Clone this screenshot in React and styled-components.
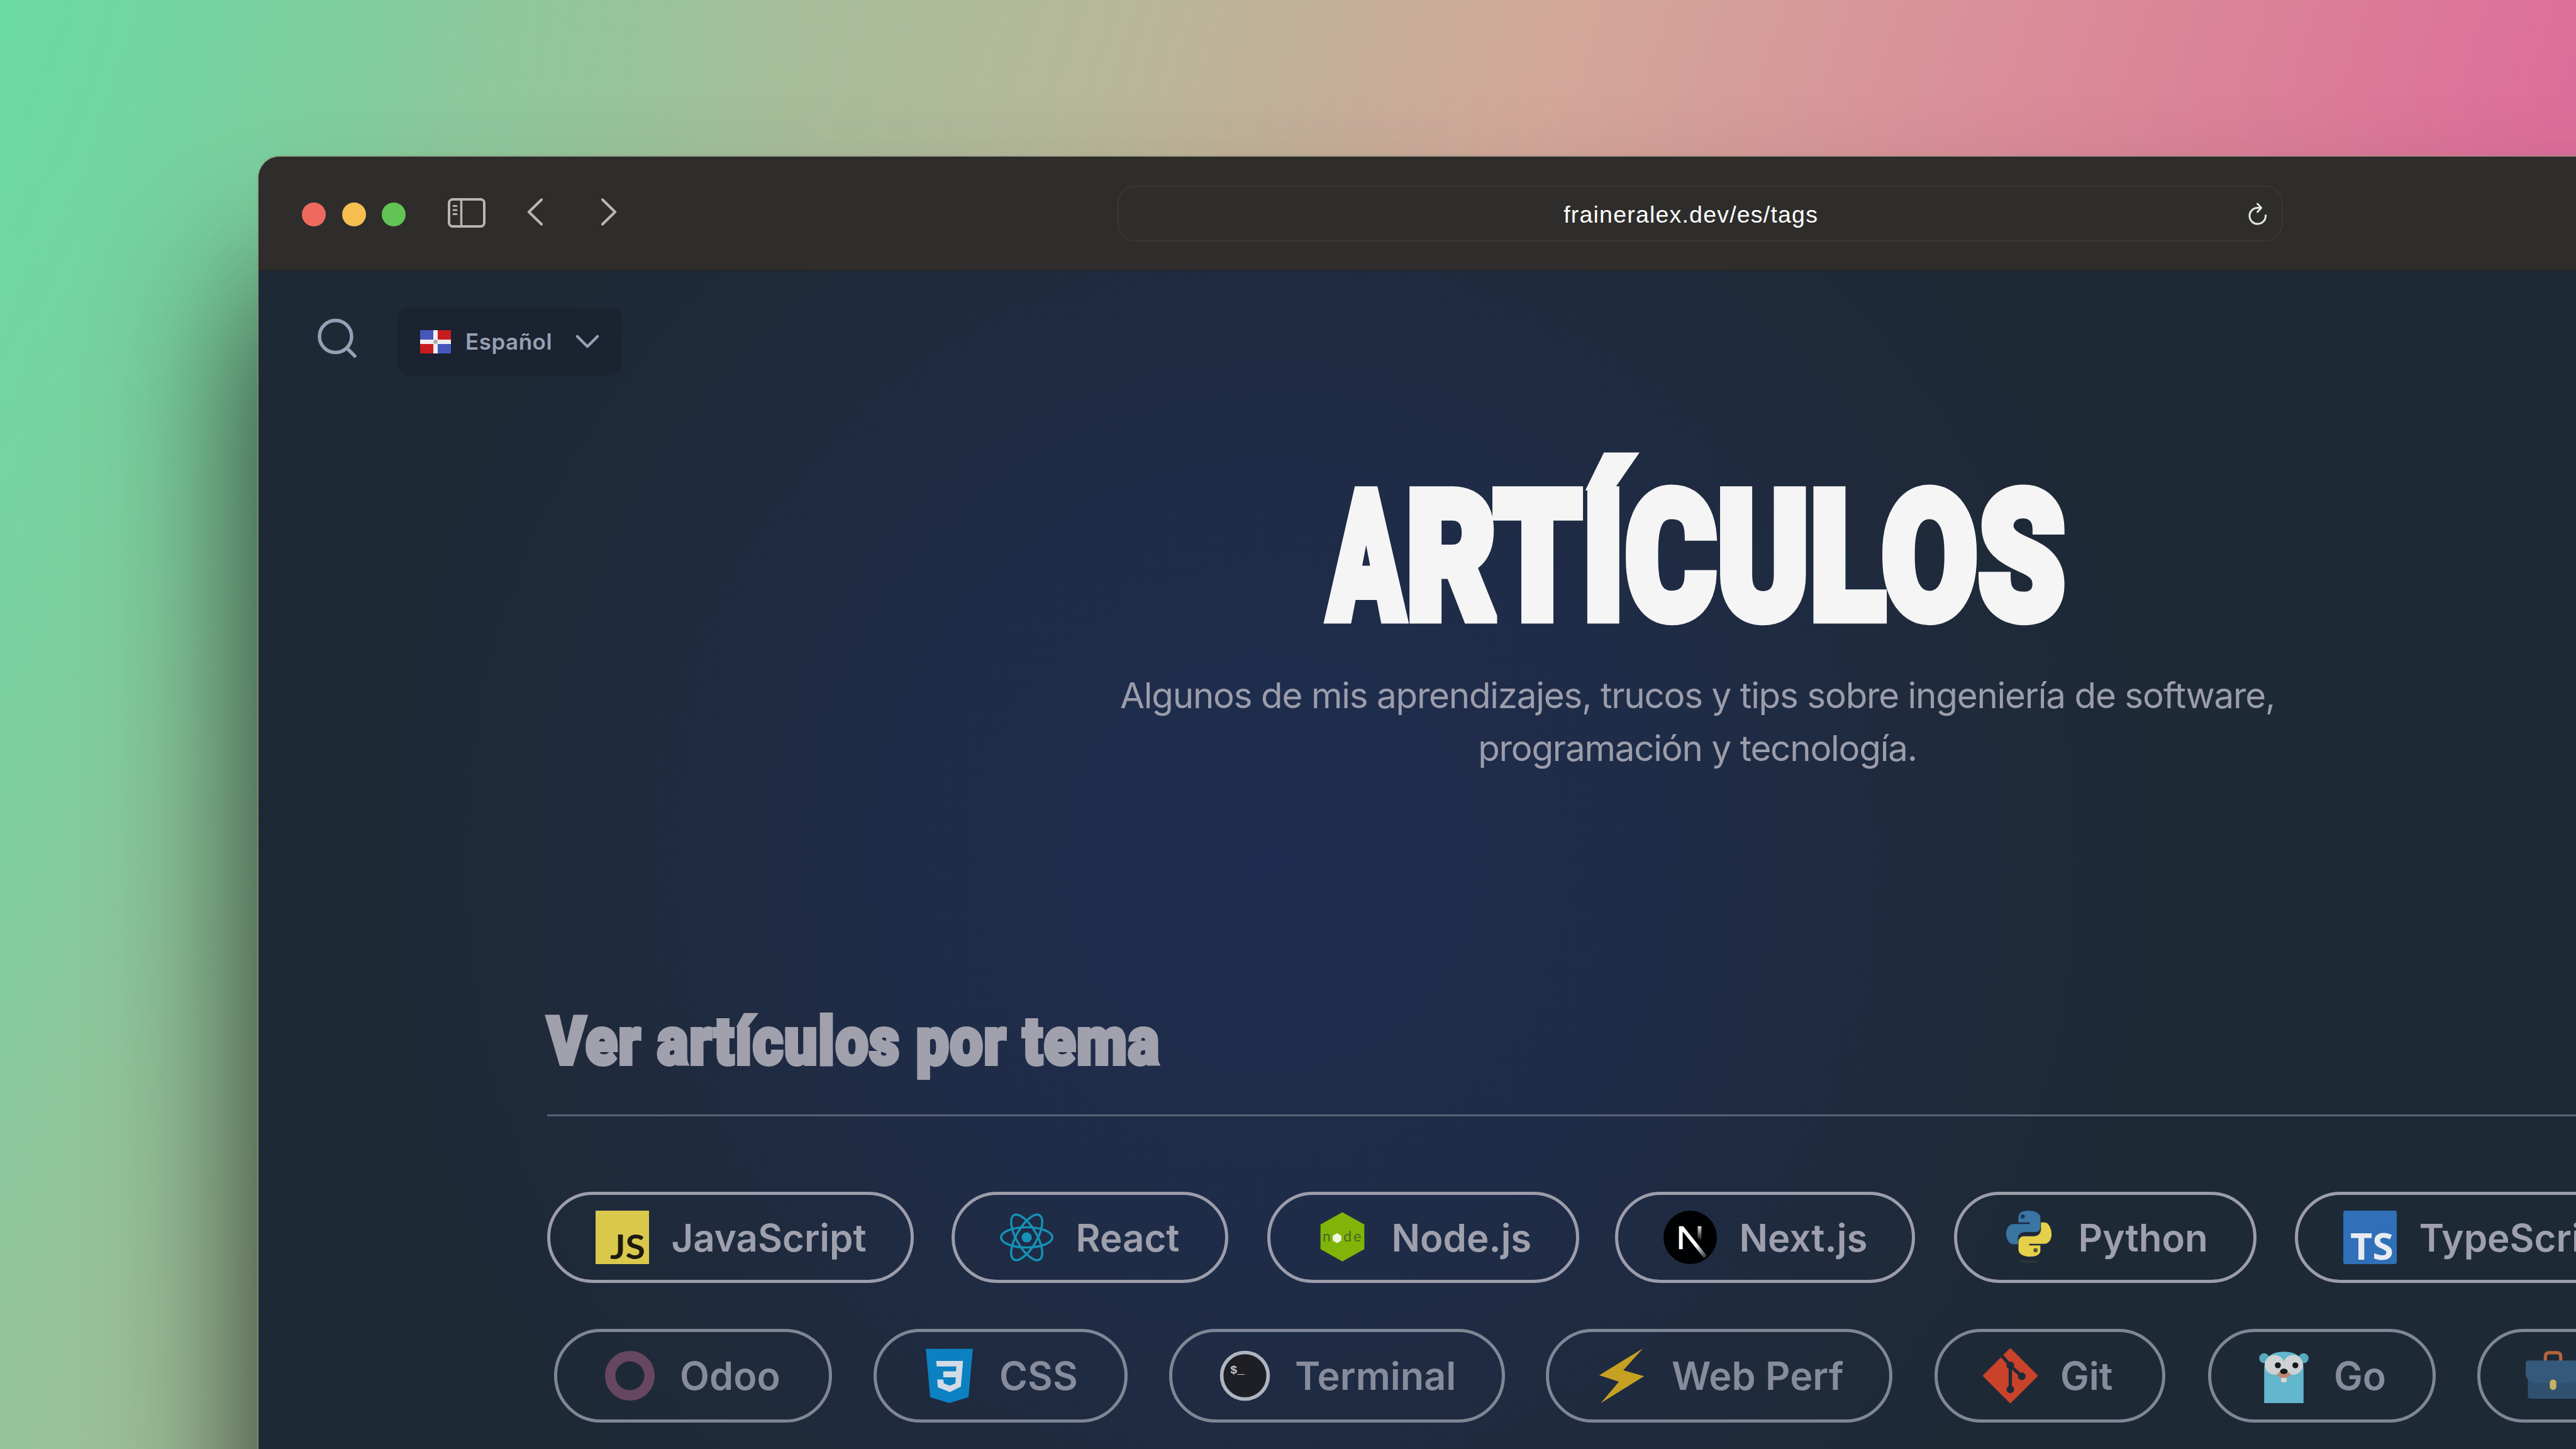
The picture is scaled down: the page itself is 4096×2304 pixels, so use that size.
import React from "react";
import styled, { createGlobalStyle } from "styled-components";

const Global = createGlobalStyle`
  html, body { margin: 0; padding: 0; background: #1e2836; }
  * { box-sizing: border-box; }
`;

const Desktop = styled.div`
  width: 4096px;
  height: 2304px;
  overflow: hidden;
  padding: 249px 0 0 411px;
  background:
    radial-gradient(ellipse 1300px 2100px at 0px 0px, rgba(96, 222, 162, 0.5), rgba(96, 222, 162, 0) 100%),
    linear-gradient(108deg, #78d5a1 0%, #82cd9e 7%, #98c39a 16%, #b5b899 36%, #d3a799 52%, #db8899 70%, #dc6f99 85%);
  font-family: Inter, "Liberation Sans", sans-serif;
`;

const Browser = styled.div`
  width: 4700px;
  height: 3000px;
  border-radius: 34px 0 0 0;
  display: flex;
  flex-direction: column;
  background: #2e2d2b;
  box-shadow: 0 0 0 2px rgba(150, 150, 125, 0.55), 0 210px 460px rgba(0, 0, 0, 0.76);
`;

const Toolbar = styled.header`
  height: 182px;
  flex: none;
  display: flex;
  align-items: center;
  padding-left: 69px;
  border-bottom: 2px solid #22262b;
  border-radius: 34px 0 0 0;
  background: #2e2d2b;
`;

const Lights = styled.div`
  display: flex;
  gap: 25.6px;
  margin-top: 4px;
`;

const Light = styled.span`
  width: 38px;
  height: 38px;
  border-radius: 50%;
  background: ${(p) => p.$color};
`;

const SidebarIcon = styled.svg`
  margin-left: 67px;
  margin-top: -2px;
  width: 60px;
  height: 47px;
`;

const NavIcon = styled.svg`
  width: 26px;
  height: 44px;
  margin-left: ${(p) => p.$gap}px;
  margin-top: -4px;
`;

const Address = styled.div`
  margin-left: 796px;
  margin-top: 1px;
  width: 1853px;
  height: 89px;
  border: 2px solid #393836;
  border-radius: 28px;
  display: flex;
  align-items: center;
  justify-content: space-between;
  padding: 0 22px 0 707px;
`;

const Url = styled.span`
  margin-top: 2px;
  font: 400 37.5px/48px "Liberation Sans", Arial, sans-serif;
  letter-spacing: 1.2px;
  color: #fff;
  white-space: nowrap;
`;

const ReloadIcon = styled.svg`
  width: 32px;
  height: 38px;
`;

const Page = styled.main`
  flex: 1;
  display: flex;
  flex-direction: column;
  background: radial-gradient(circle 1420px at 1610px 940px, #1f2d50 0%, #1f2c47 45%, #1f2a3d 75%, #1e2936 100%);
`;

const TopBar = styled.div`
  display: flex;
  align-items: center;
  height: 108px;
  margin: 58px 0 0 92px;
`;

const SearchIcon = styled.svg`
  width: 68px;
  height: 68px;
  margin-top: -13px;
`;

const LangButton = styled.button`
  width: 357px;
  height: 108px;
  margin-left: 61px;
  padding: 0 36px;
  border: 0;
  border-radius: 18px;
  background: #1b2230;
  display: flex;
  align-items: center;
  color: #95a1b4;
  font: 600 35px/44px Inter, sans-serif;
  letter-spacing: 0.5px;
`;

const Flag = styled.svg`
  width: 49px;
  height: 37px;
  margin-right: 23px;
`;

const LangChevron = styled.svg`
  width: 38px;
  height: 24px;
  margin-left: auto;
`;

const Title = styled.h1`
  margin: 107px 0 0;
  width: 4576px;
  height: 364px;
  display: flex;
  justify-content: center;
  font: 900 283px/364px Roboto, sans-serif;
  color: #f5f5f5;
  -webkit-text-stroke: 17px #f5f5f5;
  stroke-linejoin: round;
  paint-order: stroke fill;
  letter-spacing: 2px;
`;

const NarrowLetter = styled.span`
  display: inline-block;
  transform: scaleX(0.8);
  transform-origin: left;
  margin-right: -36px;
`;

const Squeeze = styled.span`
  display: block;
  flex: none;
  white-space: nowrap;
  transform: scaleX(${(p) => p.$x});
  transform-origin: ${(p) => p.$origin};
`;

const Subtitle = styled.p`
  width: 4576px;
  margin: -4px 0 0;
  text-align: center;
  font: 400 56.5px/84px Inter, sans-serif;
  letter-spacing: -1.2px;
  color: #9c9dab;
`;

const Section = styled.section`
  margin: 358px 0 0 459px;
`;

const SectionTitle = styled.h2`
  margin: 0;
  height: 185px;
  border-bottom: 3px solid #5a6478;
  font: 900 106px/132px Roboto, sans-serif;
  -webkit-text-stroke: 6px #a0a1ac;
  letter-spacing: 2px;
  color: #a0a1ac;
`;

const Row = styled.div`
  display: flex;
  align-items: center;
  height: ${(p) => p.$h}px;
  margin: ${(p) => p.$mt}px 0 0 ${(p) => p.$ml}px;
`;

const Pill = styled.a`
  flex: none;
  width: ${(p) => p.$w}px;
  height: 100%;
  margin-right: ${(p) => p.$gap}px;
  padding-left: ${(p) => (p.$dim ? 72 : 71.5)}px;
  display: flex;
  align-items: center;
  border: 5px solid ${(p) => (p.$dim ? "#7f8695" : "#9c9dab")};
  border-radius: 75px;
  color: ${(p) => (p.$dim ? "#868c9b" : "#9fa0ad")};
  font: 600 ${(p) => (p.$dim ? 61.2 : 60)}px/80px Inter, sans-serif;
  white-space: nowrap;

  svg {
    flex: none;
    width: ${(p) => (p.$dim ? 87 : 85)}px;
    height: ${(p) => (p.$dim ? 87 : 85)}px;
    margin-right: 36px;
    overflow: visible;
  }
`;

const Icon = ({ children, box = "0 0 100 100" }) => <svg viewBox={box}>{children}</svg>;

const JsIcon = () => (
  <Icon>
    <rect width="100" height="100" fill="#d9c84b" />
    <text x="27" y="91" fontFamily="Lato, sans-serif" fontWeight="700" fontSize="62" textLength="66" lengthAdjust="spacingAndGlyphs" fill="#1e1a10">JS</text>
  </Icon>
);

const ReactIcon = () => (
  <Icon>
    <g fill="none" stroke="#1592b8" strokeWidth="4">
      <ellipse cx="50" cy="50" rx="48" ry="19" />
      <ellipse cx="50" cy="50" rx="48" ry="19" transform="rotate(60 50 50)" />
      <ellipse cx="50" cy="50" rx="48" ry="19" transform="rotate(120 50 50)" />
    </g>
    <circle cx="50" cy="50" r="9.5" fill="#1592b8" />
  </Icon>
);

const NodeIcon = () => (
  <Icon>
    <path d="M50 3 91 26v46L50 95 9 72V26z" fill="#80b408" />
    <path d="m40 42 8 5v9l-8 5-8-5v-9z" fill="#eef5e4" />
    <g fontFamily="Lato, sans-serif" fontWeight="400" fontSize="27" fill="#45662a">
      <text x="13" y="58">n</text>
      <text x="52" y="58">d</text>
      <text x="71" y="58">e</text>
    </g>
  </Icon>
);

const NextIcon = () => (
  <Icon>
    <defs>
      <linearGradient id="nxa" x1="0" y1="0" x2="1" y2="1">
        <stop offset="0.6" stopColor="#fff" />
        <stop offset="1" stopColor="#fff" stopOpacity="0.1" />
      </linearGradient>
      <linearGradient id="nxb" x1="0" y1="0" x2="0" y2="1">
        <stop offset="0" stopColor="#ddd" />
        <stop offset="1" stopColor="#ddd" stopOpacity="0" />
      </linearGradient>
    </defs>
    <circle cx="50" cy="50" r="50" fill="#000103" />
    <path d="M29 29h8l44 55-5 5-40-50v33h-7z" fill="url(#nxa)" />
    <path d="M64 29h7v28l-7-6z" fill="url(#nxb)" />
  </Icon>
);

const PythonIcon = () => (
  <Icon>
    <ellipse cx="50" cy="95" rx="16" ry="2.5" fill="#2a3540" />
    <path d="M47 0C33 1 30 6 30 13v9h21v3H21C12 25 7 34 7 43s5 20 14 20h8V53c0-9 6-13 13-13h20c6 0 9-4 9-10V13C71 5 61 0 47 0z" fill="#3a75a3" />
    <circle cx="38" cy="11" r="4" fill="#1e3a58" />
    <path d="M54 86c13-1 17-6 17-12v-9H50v-3h28c9 0 14-9 14-18s-5-22-13-22h-7v13c0 8-6 13-13 13H40c-6 0-10 5-10 11v14c0 8 10 14 24 13z" fill="#e6d04a" />
    <circle cx="62" cy="74" r="4" fill="#5c5a2a" />
  </Icon>
);

const TsIcon = () => (
  <Icon>
    <rect width="100" height="100" rx="4" fill="#2f70b8" />
    <text x="13" y="92" fontFamily="'Open Sans', sans-serif" fontWeight="700" fontSize="70" textLength="81" lengthAdjust="spacingAndGlyphs" fill="#e8ebf2">TS</text>
  </Icon>
);

const OdooIcon = () => (
  <Icon>
    <circle cx="50" cy="50" r="36" fill="none" stroke="#67475f" strokeWidth="19" />
  </Icon>
);

const CssIcon = () => (
  <Icon>
    <path d="M7 1h86l-8 88-35 11-35-11z" fill="#0c81c2" />
    <path d="M26 23h49l-4 47-20 10-22-9-1-14h11l1 7 11 4 10-4 1-11H39V42h23l1-9H27z" fill="#d3dce6" />
  </Icon>
);

const TerminalIcon = () => (
  <Icon>
    <circle cx="50" cy="50" r="42.5" fill="#1d1f25" stroke="#aeb5c0" strokeWidth="6.5" />
    <text x="23" y="46" fontFamily="'Liberation Mono', monospace" fontWeight="700" fontSize="22" fill="#c3c6cc">$_</text>
  </Icon>
);

const BoltIcon = () => (
  <Icon>
    <path d="M89 0 53 40l38 11L12 100l33-39L9 49z" fill="#c6a021" />
  </Icon>
);

const GitIcon = () => (
  <Icon>
    <path d="M50 2 98 50 50 98 2 50z" fill="#c8432a" stroke="#c8432a" strokeWidth="4" strokeLinejoin="round" />
    <g stroke="#1e2a38" strokeWidth="6" fill="#1e2a38">
      <path d="M34 13 50 31v43M50 32l20 18" fill="none" />
      <circle cx="50" cy="31" r="4" />
      <circle cx="50" cy="75" r="4" />
      <circle cx="71" cy="51" r="4" />
    </g>
  </Icon>
);

const GoIcon = () => (
  <Icon>
    <circle cx="14" cy="18" r="9" fill="#57a9bd" />
    <circle cx="86" cy="18" r="9" fill="#57a9bd" />
    <path d="M14 100V38Q14 6 50 6t36 32v62z" fill="#62b6cd" />
    <circle cx="33" cy="30" r="18" fill="#cfd2d4" />
    <circle cx="67" cy="30" r="18" fill="#cfd2d4" />
    <circle cx="39" cy="31" r="5.5" fill="#15181c" />
    <circle cx="71" cy="31" r="5.5" fill="#15181c" />
    <rect x="45" y="50" width="10" height="12" rx="3" fill="#dcd7d2" />
    <ellipse cx="50" cy="48" rx="12" ry="6" fill="#b98a72" />
    <ellipse cx="50" cy="42" rx="7" ry="5" fill="#15181c" />
  </Icon>
);

const WorkIcon = () => (
  <Icon>
    <path d="M36 24v-9q0-7 7-7h14q7 0 7 7v9" fill="none" stroke="#b5633e" strokeWidth="6" />
    <path d="M4 40h92v47q0 5-5 5H9q-5 0-5-5z" fill="#31506e" />
    <path d="M0 27q0-5 5-5h90q5 0 5 5v22q-4 14-24 14H24Q4 63 0 49z" fill="#35597a" />
    <rect x="44" y="57" width="12" height="19" rx="6" fill="#c3b35f" />
  </Icon>
);

const topics = [
  { label: "JavaScript", icon: JsIcon, w: 583, gap: 60 },
  { label: "React", icon: ReactIcon, w: 440, gap: 62 },
  { label: "Node.js", icon: NodeIcon, w: 496, gap: 57 },
  { label: "Next.js", icon: NextIcon, w: 477, gap: 62 },
  { label: "Python", icon: PythonIcon, w: 481, gap: 61 },
  { label: "TypeScript", icon: TsIcon, w: 592, gap: 60 },
];

const moreTopics = [
  { label: "Odoo", icon: OdooIcon, w: 442, gap: 66 },
  { label: "CSS", icon: CssIcon, w: 404, gap: 66 },
  { label: "Terminal", icon: TerminalIcon, w: 534, gap: 65 },
  { label: "Web Perf", icon: BoltIcon, w: 551, gap: 67 },
  { label: "Git", icon: GitIcon, w: 367, gap: 68 },
  { label: "Go", icon: GoIcon, w: 362, gap: 66 },
  { label: "", icon: WorkIcon, w: 520, gap: 66 },
];

const Pills = ({ items, dim }) =>
  items.map(({ label, icon: Glyph, w, gap }) => (
    <Pill key={label} $w={w} $gap={gap} $dim={dim}>
      <Glyph />
      {label}
    </Pill>
  ));

export default function App() {
  return (
    <Desktop>
      <Global />
      <Browser>
        <Toolbar>
          <Lights>
            <Light $color="#ee6a5f" />
            <Light $color="#f5be4f" />
            <Light $color="#61c454" />
          </Lights>
          <SidebarIcon viewBox="0 0 60 47" fill="none" stroke="#b7b6b4">
            <rect x="2" y="2" width="56" height="43" rx="6" strokeWidth="4" />
            <path d="M21.5 2v43" strokeWidth="3.5" />
            <path d="M9 12.500h5M9 19h5M9 25.500h5" strokeWidth="3" strokeLinecap="round" />
          </SidebarIcon>
          <NavIcon $gap={66} viewBox="0 0 26 44" fill="none" stroke="#b7b6b4" strokeWidth="4.200" strokeLinecap="round" strokeLinejoin="round">
            <path d="M23 2.500 3 22l20 19.500" />
          </NavIcon>
          <NavIcon $gap={91} viewBox="0 0 26 44" fill="none" stroke="#b7b6b4" strokeWidth="4.200" strokeLinecap="round" strokeLinejoin="round">
            <path d="M3 2.500 23 22 3 41.500" />
          </NavIcon>
          <Address>
            <Url>fraineralex.dev/es/tags</Url>
            <ReloadIcon viewBox="0 0 32 38" fill="none" stroke="#e6e6e5" strokeWidth="3" strokeLinecap="round" strokeLinejoin="round">
              <path d="M28.500 21.500A12.800 12.800 0 1 1 15.700 9.500h5" />
              <path d="M15.500 3l6 6.500-6 6.500" />
            </ReloadIcon>
          </Address>
        </Toolbar>
        <Page>
          <TopBar>
            <SearchIcon viewBox="0 0 68 68" fill="none" stroke="#93a1b5" strokeWidth="5.500" strokeLinecap="round">
              <circle cx="30.500" cy="32" r="25.500" />
              <path d="M49 51l12 12" />
            </SearchIcon>
            <LangButton>
              <Flag viewBox="0 0 49 37">
                <rect width="49" height="37" fill="#f1eef2" />
                <path d="M0 0h21v15H0zM28 22h21v15H28z" fill="#4658bd" />
                <path d="M28 0h21v15H28zM0 22h21v15H0z" fill="#c81d1d" />
                <circle cx="24.500" cy="18.500" r="3.500" fill="#a9b6a4" />
              </Flag>
              Español
              <LangChevron viewBox="0 0 38 24" fill="none" stroke="#93a1b5" strokeWidth="4.500" strokeLinecap="round" strokeLinejoin="round">
                <path d="M3 4l16 16L35 4" />
              </LangChevron>
            </LangButton>
          </TopBar>
          <Title>
            <Squeeze $x={0.778} $origin="center"><NarrowLetter>A</NarrowLetter>RTÍCULOS</Squeeze>
          </Title>
          <Subtitle>
            Algunos de mis aprendizajes, trucos y tips sobre ingeniería de software,
            <br />
            programación y tecnología.
          </Subtitle>
          <Section>
            <SectionTitle>
              <Squeeze $x={0.875} $origin="left">Ver artículos por tema</Squeeze>
            </SectionTitle>
            <Row $h={145} $mt={120} $ml={0}>
              <Pills items={topics} />
            </Row>
            <Row $h={149} $mt={73} $ml={11}>
              <Pills items={moreTopics} dim />
            </Row>
          </Section>
        </Page>
      </Browser>
    </Desktop>
  );
}
